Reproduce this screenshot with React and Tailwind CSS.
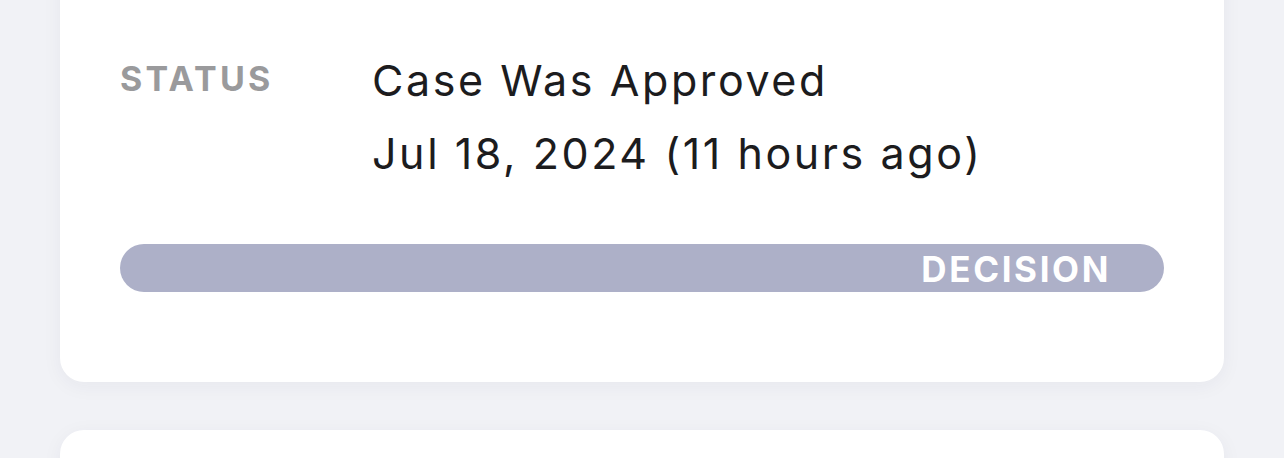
import React from 'react';

const font = { fontFamily: 'Inter, "Noto Sans", sans-serif' };

export default function App() {
  return (
    <div className="w-[1284px] h-[458px] overflow-hidden bg-[#f1f2f6]" style={font}>
      <div className="px-[60px] flex flex-col gap-[48px] -mt-[40px]">
        {/* Status card */}
        <div className="bg-white rounded-[24px] shadow-[0_4px_20px_rgba(30,40,80,0.05)] px-[60px] pt-[98px] pb-[90px]">
          <div className="flex">
            <div className="w-[252px] -mt-[1px] text-[34px] font-bold tracking-[0.095em] text-[#9a9a9c] leading-[44px]">
              STATUS
            </div>
            <div className="flex flex-col text-[#1c1c1e] text-[43px] leading-[73px] tracking-[0.06em] -mt-[14px]">
              <span>Case Was Approved</span>
              <span>Jul 18, 2024 (11 hours ago)</span>
            </div>
          </div>
          <div className="mt-[54px] h-[48px] rounded-full bg-[#adb0c8] flex items-center justify-end pr-[53px]">
            <span className="text-white font-bold text-[35px] tracking-[0.075em] leading-none pt-[3px]">DECISION</span>
          </div>
        </div>
        {/* Next card */}
        <div className="bg-white rounded-[24px] h-[200px] shadow-[0_4px_20px_rgba(30,40,80,0.05)]" />
      </div>
    </div>
  );
}
